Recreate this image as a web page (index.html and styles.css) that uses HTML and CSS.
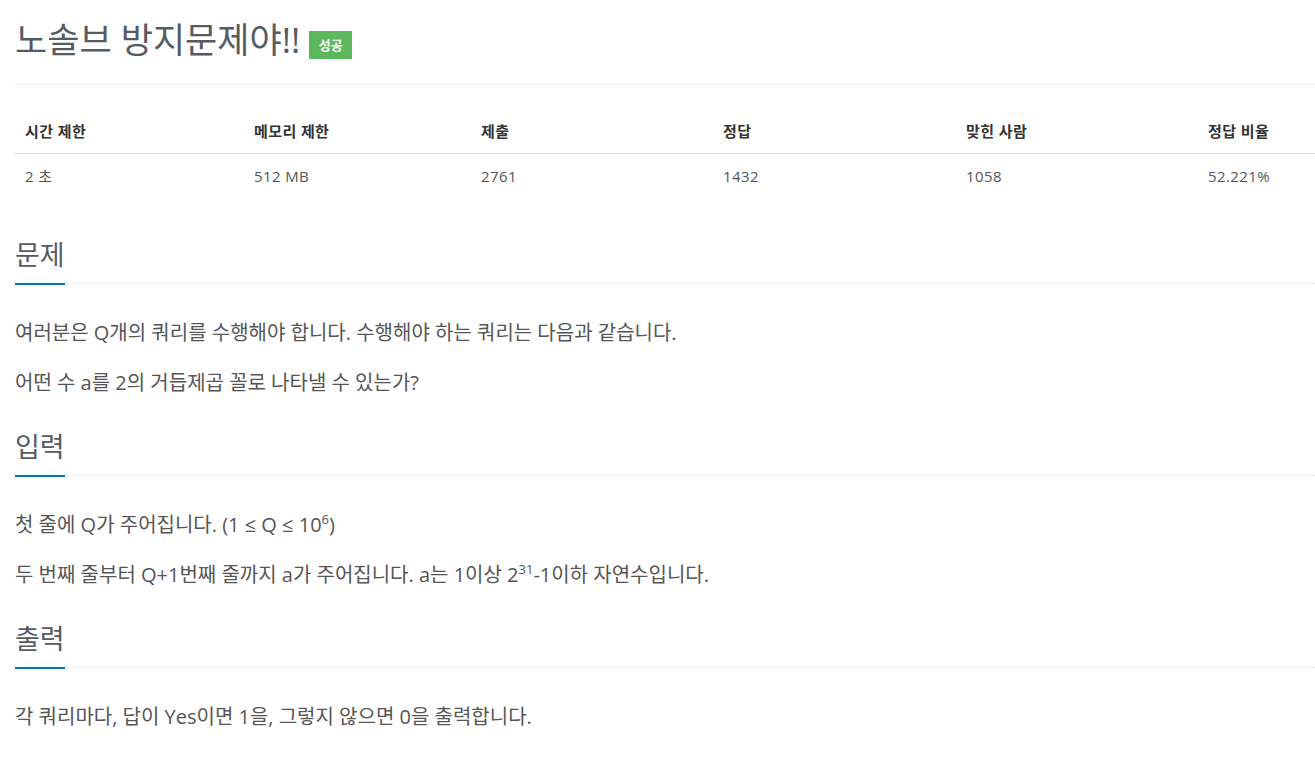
FILE: index.html
```html
<!DOCTYPE html>
<html lang="ko">
<head>
<meta charset="utf-8">
<title>노솔브 방지문제야!!</title>
<link rel="stylesheet" href="styles.css">
</head>
<body>
<div class="container">
  <div class="page-header">
    <h1 class="title"><span class="title-text">노솔브 방지문제야!!</span><span class="badge">성공</span></h1>
  </div>

  <table class="info">
    <thead>
      <tr><th>시간 제한</th><th>메모리 제한</th><th>제출</th><th>정답</th><th>맞힌 사람</th><th>정답 비율</th></tr>
    </thead>
    <tbody>
      <tr><td>2 초</td><td>512 MB</td><td>2761</td><td>1432</td><td>1058</td><td>52.221%</td></tr>
    </tbody>
  </table>

  <section class="section">
    <div class="headline"><h2>문제</h2></div>
    <div class="text">
      <p>여러분은 Q개의 쿼리를 수행해야 합니다. 수행해야 하는 쿼리는 다음과 같습니다.</p>
      <p>어떤 수 a를 2의 거듭제곱 꼴로 나타낼 수 있는가?</p>
    </div>
  </section>

  <section class="section">
    <div class="headline"><h2>입력</h2></div>
    <div class="text">
      <p>첫 줄에 Q가 주어집니다. (1 ≤ Q ≤ 10<sup>6</sup>)</p>
      <p>두 번째 줄부터 Q+1번째 줄까지 a가 주어집니다. a는 1이상 2<sup>31</sup>-1이하 자연수입니다.</p>
    </div>
  </section>

  <section class="section">
    <div class="headline"><h2>출력</h2></div>
    <div class="text">
      <p>각 쿼리마다, 답이 Yes이면 1을, 그렇지 않으면 0을 출력합니다.</p>
    </div>
  </section>
</div>
</body>
</html>
```

FILE: styles.css
```css
* { box-sizing: border-box; }

html, body {
  margin: 0;
  padding: 0;
  background: #fff;
}

body {
  font-family: "Open Sans", "Noto Sans CJK KR", sans-serif;
  color: #555;
  overflow: hidden;
}

.container {
  padding: 0 0 0 15px;
}

.page-header {
  border-bottom: 1px solid #eee;
  padding-bottom: 27px;
}

.title {
  margin: 23px 0 0 0;
  height: 34px;
  display: flex;
  align-items: center;
  font-weight: 400;
  font-size: 35px;
  line-height: 34px;
  color: #555b63;
}

.title-text {
  display: block;
  white-space: nowrap;
}

.badge {
  display: block;
  flex: none;
  margin-left: 9px;
  margin-top: 10px;
  width: 43px;
  height: 28px;
  background: #5cb85c;
  color: #fff;
  font-size: 13px;
  font-weight: 700;
  line-height: 28px;
  text-align: center;
}

.info {
  margin-top: 24px;
  width: 1300px;
  border-collapse: collapse;
  table-layout: fixed;
  font-size: 15px;
  line-height: 20px;
  letter-spacing: 0.4px;
}

.info th,
.info td {
  text-align: left;
  padding: 12px 10px;
  vertical-align: middle;
}

.info th {
  color: #333;
  font-weight: 700;
  border-bottom: 1px solid #ddd;
}

.info td {
  color: #555;
}

.info th:nth-child(1) { width: 229px; }
.info th:nth-child(2) { width: 227px; }
.info th:nth-child(3) { width: 242px; }
.info th:nth-child(4) { width: 243px; }
.info th:nth-child(5) { width: 242px; }
.info th:nth-child(6) { width: 117px; }

.section {
  margin-top: 9px;
}

.section:first-of-type {
  margin-top: 37px;
}

.headline {
  border-bottom: 1px dotted #dde2e8;
  margin-bottom: 34px;
}

.headline h2 {
  display: inline-block;
  margin: 0 0 -2px 0;
  padding-bottom: 8px;
  border-bottom: 2px solid #0076c0;
  font-size: 27px;
  font-weight: 400;
  line-height: 40px;
  color: #555b63;
}

.text {
  display: flow-root;
}

.text p {
  margin: 0 0 20px 0;
  font-size: 20px;
  line-height: 30px;
  color: #555;
}

.text sup {
  font-size: 13px;
  line-height: 0;
  vertical-align: 8px;
}
```
